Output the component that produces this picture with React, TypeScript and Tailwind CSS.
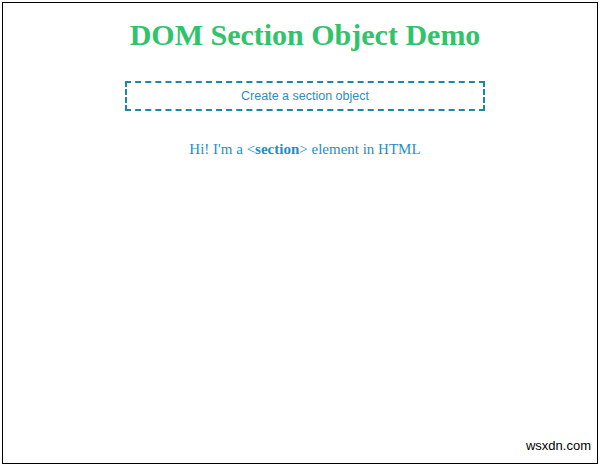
export default function App() {
  return (
    <div className="w-[600px] h-[466px] bg-white p-[2px]">
      <div className="relative w-[596px] h-[462px] border border-black flex flex-col items-center pl-[10px]">
        <h1 className="mt-[14px] text-[30px] leading-[35px] font-bold text-[#2fc46a] font-['Liberation_Serif',serif]">
          DOM Section Object Demo
        </h1>
        <button className="mt-[29px] w-[360px] h-[30px] border-2 border-dashed border-[#1b88a8] text-[12.5px] text-[#2a8fc4] font-['Liberation_Sans',sans-serif] bg-white">
          Create a section object
        </button>
        <p className="mt-[27px] text-[15px] text-[#1e8fc8] font-['Liberation_Serif',serif]">
          Hi! I'm a &lt;<b>section</b>&gt; element in HTML
        </p>
        <div className="absolute right-[6px] bottom-[8px] text-[13px] text-black font-['Liberation_Sans',sans-serif]">
          wsxdn.com
        </div>
      </div>
    </div>
  );
}
